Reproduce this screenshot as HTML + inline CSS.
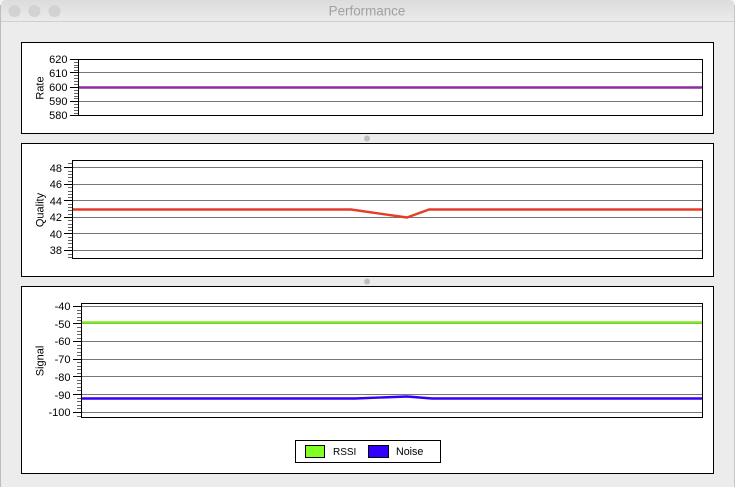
<!DOCTYPE html>
<html>
<head>
<meta charset="utf-8">
<title>Performance</title>
<style>
html,body{margin:0;padding:0;background:#ececec;width:735px;height:487px;overflow:hidden}
svg{display:block;position:absolute;left:0;top:0}
text{font-family:"Liberation Sans",sans-serif;font-size:11px;fill:#000}
.r{text-anchor:end}
.f{fill:#fff;stroke:#000;stroke-width:1}
.n{fill:none;stroke:#000;stroke-width:1}
.g{fill:none;stroke:#777;stroke-width:1}
.m{fill:none;stroke:#666;stroke-width:1}
.d{fill:none;stroke-width:2.4;stroke-linejoin:round}
</style>
</head>
<body>
<svg width="735" height="487" viewBox="0 0 735 487" xmlns="http://www.w3.org/2000/svg">
<defs>
<linearGradient id="tb" x1="0" y1="0" x2="0" y2="1">
<stop offset="0" stop-color="#dcdcdc"/>
<stop offset="1" stop-color="#ebebeb"/>
</linearGradient>
</defs>
<rect x="0" y="0" width="735" height="487" fill="#ececec"/>
<rect x="0" y="0" width="735" height="22" fill="#f4f4f4"/>
<path d="M1 22V5Q1 0 6 0H729Q734 0 734 5V22Z" fill="url(#tb)"/>
<rect x="1" y="21" width="733" height="1" fill="#cfcfcf"/>
<rect x="0" y="5" width="1" height="482" fill="#bdbdbd"/>
<rect x="734" y="5" width="1" height="482" fill="#c6c6c6"/>
<circle cx="14.5" cy="11" r="6" fill="#d2d2d2"/>
<circle cx="34.5" cy="11" r="6" fill="#d2d2d2"/>
<circle cx="54.5" cy="11" r="6" fill="#d2d2d2"/>
<text x="367" y="15.5" text-anchor="middle" style="font-size:13.4px;fill:#a0a0a0">Performance</text>

<circle cx="367" cy="138.5" r="3" fill="#bdbdbd"/>
<circle cx="367" cy="281.5" r="3" fill="#bdbdbd"/>

<!-- Rate -->
<rect class="f" x="21.5" y="42.5" width="692" height="91"/>
<rect class="f" x="78.5" y="59.5" width="624" height="56"/>
<path class="g" d="M79 72.5H702M79 101.5H702"/>
<path class="m" d="M74 62.5H78M74 65.5H78M74 67.5H78M74 70.5H78M74 75.5H78M74 78.5H78M74 81.5H78M74 84.5H78M74 90.5H78M74 93.5H78M74 96.5H78M74 98.5H78M74 104.5H78M74 107.5H78M74 110.5H78M74 113.5H78"/>
<path class="n" d="M70 59.5H78M70 72.5H78M70 87.5H78M70 101.5H78M70 115.5H78"/>
<path class="d" stroke="#8d2ba0" d="M79 87.5H702"/>
<text class="r" x="67.5" y="63">620</text>
<text class="r" x="67.5" y="77">610</text>
<text class="r" x="67.5" y="91">600</text>
<text class="r" x="67.5" y="105">590</text>
<text class="r" x="67.5" y="119">580</text>
<text transform="translate(43.5,88) rotate(-90)" text-anchor="middle">Rate</text>

<!-- Quality -->
<rect class="f" x="21.5" y="143.5" width="692" height="133"/>
<rect class="f" x="72.5" y="160.5" width="630" height="98"/>
<path class="g" d="M73 167.5H702M73 184.5H702M73 200.5H702M73 217.5H702M73 233.5H702M73 250.5H702"/>
<path class="m" d="M68 163.5H72M68 171.5H72M68 174.5H72M68 177.5H72M68 181.5H72M68 187.5H72M68 191.5H72M68 194.5H72M68 197.5H72M68 204.5H72M68 207.5H72M68 210.5H72M68 214.5H72M68 220.5H72M68 224.5H72M68 227.5H72M68 230.5H72M68 237.5H72M68 240.5H72M68 243.5H72M68 247.5H72M68 254.5H72M68 257.5H72"/>
<path class="n" d="M64 167.5H72M64 184.5H72M64 200.5H72M64 217.5H72M64 233.5H72M64 250.5H72"/>
<path class="d" stroke="#e63c28" d="M73 209.5H351L407 217.5L429 209.5H702"/>
<text class="r" x="62" y="172">48</text>
<text class="r" x="62" y="188">46</text>
<text class="r" x="62" y="205">44</text>
<text class="r" x="62" y="221">42</text>
<text class="r" x="62" y="238">40</text>
<text class="r" x="62" y="254">38</text>
<text transform="translate(43.5,210) rotate(-90)" text-anchor="middle">Quality</text>

<!-- Signal -->
<rect class="f" x="21.5" y="286.5" width="692" height="187"/>
<rect class="f" x="81.5" y="303.5" width="621" height="114"/>
<path class="g" d="M82 306.5H702M82 323.5H702M82 341.5H702M82 359.5H702M82 376.5H702M82 394.5H702M82 412.5H702"/>
<path class="m" d="M77 310.5H81M77 313.5H81M77 317.5H81M77 320.5H81M77 327.5H81M77 331.5H81M77 334.5H81M77 338.5H81M77 345.5H81M77 348.5H81M77 352.5H81M77 355.5H81M77 362.5H81M77 366.5H81M77 369.5H81M77 373.5H81M77 380.5H81M77 383.5H81M77 387.5H81M77 390.5H81M77 398.5H81M77 401.5H81M77 405.5H81M77 408.5H81M77 416.5H81"/>
<path class="n" d="M73 306.5H81M73 323.5H81M73 341.5H81M73 359.5H81M73 376.5H81M73 394.5H81M73 412.5H81"/>
<path class="d" stroke="#7fe81e" d="M82 322.5H702"/>
<path class="d" stroke="#3300f5" d="M82 398.5H355L407 396.5L432 398.5H702"/>
<text class="r" x="70.5" y="310">-40</text>
<text class="r" x="70.5" y="328">-50</text>
<text class="r" x="70.5" y="345">-60</text>
<text class="r" x="70.5" y="363">-70</text>
<text class="r" x="70.5" y="381">-80</text>
<text class="r" x="70.5" y="399">-90</text>
<text class="r" x="70.5" y="416">-100</text>
<text transform="translate(43.5,361) rotate(-90)" text-anchor="middle">Signal</text>

<!-- Legend -->
<rect class="f" x="295.5" y="440.5" width="145" height="22"/>
<rect x="305.5" y="445.5" width="19" height="12" fill="#80ff20" stroke="#000"/>
<rect x="368.5" y="445.5" width="20" height="12" fill="#3300ff" stroke="#000"/>
<text x="333" y="455" style="font-size:10px">RSSI</text>
<text x="396" y="455" style="font-size:10.7px">Noise</text>
</svg>
</body>
</html>
